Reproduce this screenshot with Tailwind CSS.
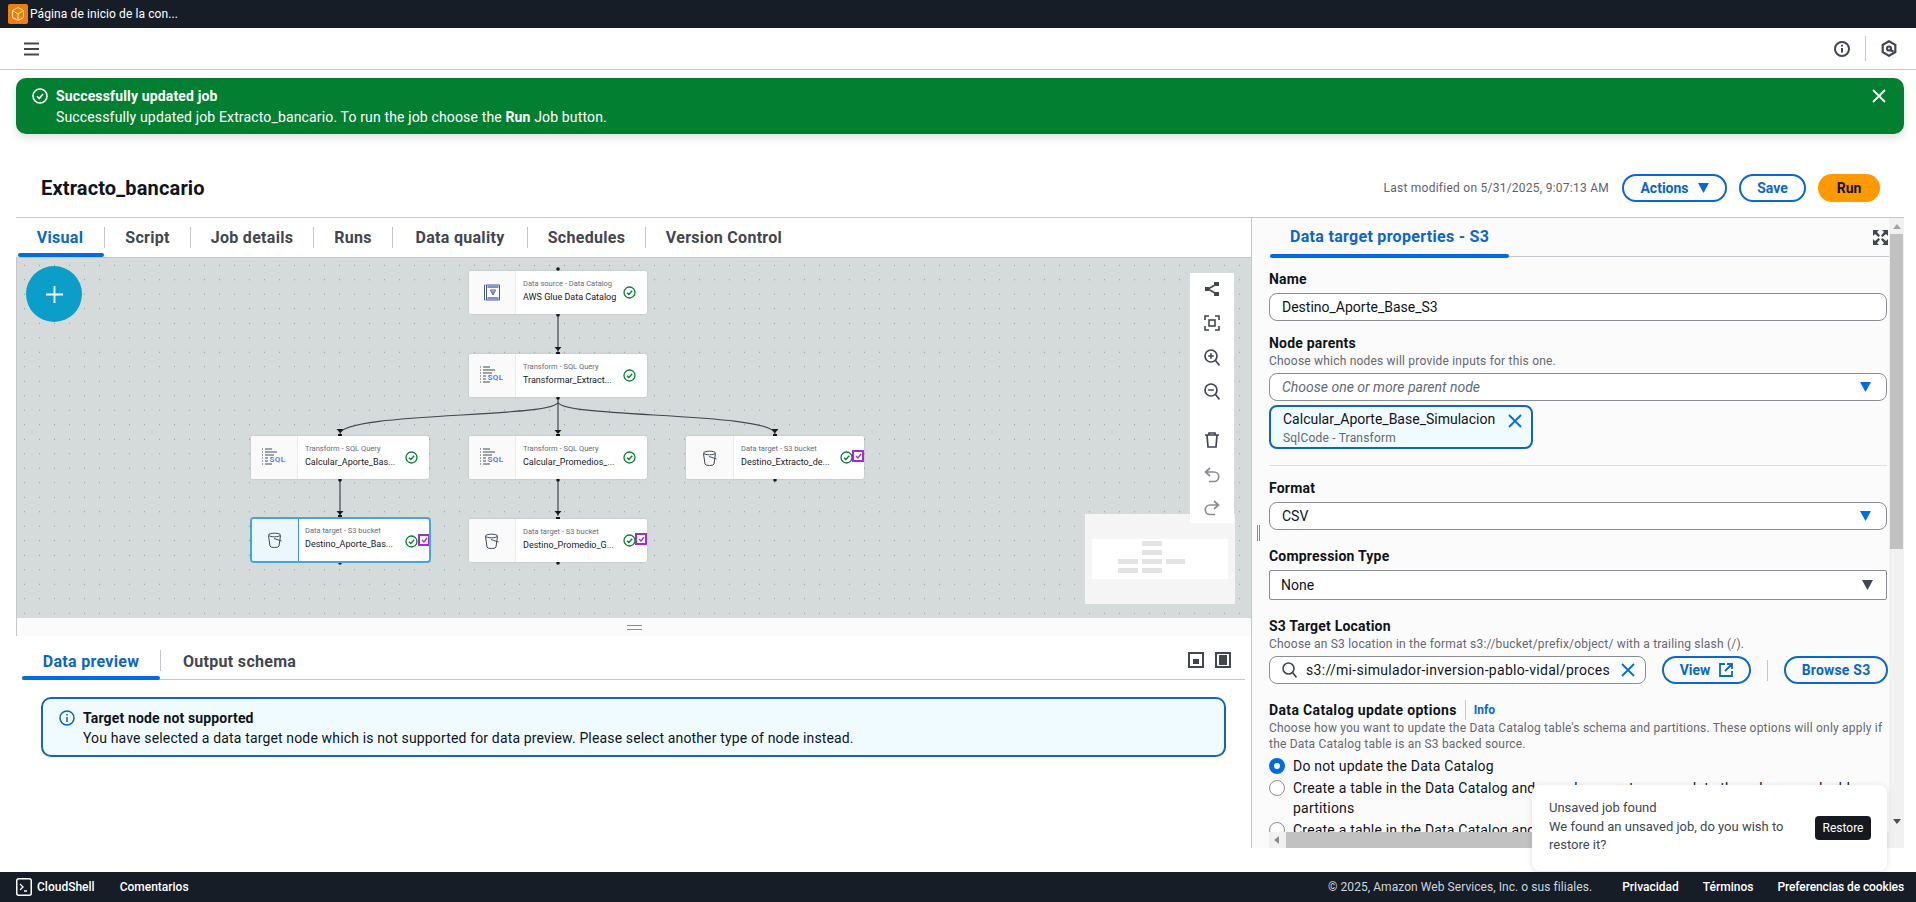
<!DOCTYPE html>
<html lang="es">
<head>
<meta charset="utf-8">
<title>Extracto_bancario</title>
<script src="https://cdn.jsdelivr.net/npm/@tailwindcss/browser@4"></script>
</head>
<body class="w-[1916px] h-[902px] overflow-hidden bg-white font-['Roboto',sans-serif] text-[14px] text-[#0f141a]">
<div class="relative flex flex-col h-[902px]">

  <!-- top bar -->
  <header class="h-[28px] bg-[#161d26] flex items-center pl-[8px] gap-[2px] text-white text-[12px] tracking-[0.1px] shrink-0">
    <span class="w-[20px] h-[20px] rounded-[2px] bg-[#f07f0a] flex items-center justify-center">
      <svg width="16" height="16" viewBox="0 0 16 16" fill="none" stroke="#ffe3c4" stroke-width="1"><path d="M8 1.500l5.500 3v7L8 14.500l-5.500-3v-7z"/><path d="M2.500 4.500L8 8l5.500-3.500M8 8v6.500"/></svg>
    </span>
    <span>Página de inicio de la con...</span>
  </header>

  <!-- nav -->
  <nav class="h-[42px] border-b border-[#c6c6cd] flex items-center justify-between pl-[24px] pr-[19px] shrink-0">
    <svg width="15" height="14" viewBox="0 0 15 14" stroke="#424650" stroke-width="2"><path d="M0 1.500h15M0 7h15M0 12.500h15"/></svg>
    <div class="flex items-center">
      <svg width="16" height="16" viewBox="0 0 16 16" fill="none" stroke="#424650" stroke-width="2"><circle cx="8" cy="8" r="7"/><path d="M8 7v4.500M8 3.700v1.700"/></svg>
      <span class="w-px h-[25px] bg-[#c6c6cd] mx-[15px]"></span>
      <svg width="16" height="17" viewBox="0 0 16 17" fill="none" stroke="#424650" stroke-width="2.200"><path d="M8 1.200l6.300 3.600v7.400L8 15.800l-6.300-3.600V4.800z"/><circle cx="8" cy="8.500" r="2"/><path d="M9.500 10l3 1.700"/></svg>
    </div>
  </nav>

  <!-- main -->
  <main class="flex-1 min-h-0 flex flex-col pl-[16px] pr-[12px]">
    <!-- flash -->
    <div class="mt-[8px] h-[56px] bg-[#037f31] rounded-[10px] text-white flex items-start pl-[16px] pr-[18px] pt-[8px] shadow-[0_4px_8px_rgba(0,0,0,0.12)] shrink-0">
      <svg class="mt-[2px] mr-[8px] shrink-0" width="16" height="16" viewBox="0 0 16 16" fill="none" stroke="#fff" stroke-width="1.600"><circle cx="8" cy="8" r="7"/><path d="M5 8.300l2.200 2.200L11 6"/></svg>
      <div class="flex-1 leading-[20px] text-[14px] tracking-[0.15px]">
        <div class="font-bold">Successfully updated job</div>
        <div class="mt-px">Successfully updated job Extracto_bancario. To run the job choose the <b>Run</b> Job button.</div>
      </div>
      <svg class="mt-[3px]" width="14" height="14" viewBox="0 0 14 14" stroke="#fff" stroke-width="1.800"><path d="M1 1l12 12M13 1L1 13"/></svg>
    </div>

    <!-- page header -->
    <div class="h-[83px] flex items-center justify-between pl-[25px] pr-[24px] pt-[25px] shrink-0">
      <h1 class="text-[20px] font-bold tracking-[0.15px]">Extracto_bancario</h1>
      <div class="flex items-center">
        <span class="text-[12px] tracking-[0.25px] text-[#5f6368] mr-[13px]">Last modified on 5/31/2025, 9:07:13 AM</span>
        <button class="h-[28px] w-[105px] rounded-full border-2 border-[#0a68d0] text-[#0a65cc] font-bold flex items-center justify-center gap-[9px]">Actions
          <svg width="11" height="10" viewBox="0 0 11 10" fill="#0a68d0"><path d="M0 0h11L5.500 10z"/></svg></button>
        <button class="ml-[12px] h-[28px] w-[67px] rounded-full border-2 border-[#0a68d0] text-[#0a65cc] font-bold">Save</button>
        <button class="ml-[12px] h-[28px] w-[62px] rounded-full bg-[#ff9900] font-bold">Run</button>
      </div>
    </div>

    <!-- split -->
    <div class="flex-1 min-h-0 flex border-t border-[#c6c6cd] mb-[24px]">
      <!-- left pane -->
      <section class="w-[1235px] flex flex-col shrink-0">
        <div class="h-[39px] flex items-center text-[16px] font-bold tracking-[0.3px] text-[#424650] shrink-0 relative">
          <div class="w-[88px] h-[39px] flex items-center justify-center text-[#0b66c8] relative">Visual<span class="absolute left-[2px] right-0 bottom-0 h-[4px] rounded-[2px] bg-[#006ce0]"></span></div>
          <span class="w-px h-[21px] bg-[#c6c6cd]"></span>
          <div class="w-[85px] text-center">Script</div>
          <span class="w-px h-[21px] bg-[#c6c6cd]"></span>
          <div class="w-[122px] text-center">Job details</div>
          <span class="w-px h-[21px] bg-[#c6c6cd]"></span>
          <div class="w-[78px] text-center">Runs</div>
          <span class="w-px h-[21px] bg-[#c6c6cd]"></span>
          <div class="w-[134px] text-center">Data quality</div>
          <span class="w-px h-[21px] bg-[#c6c6cd]"></span>
          <div class="w-[117px] text-center">Schedules</div>
          <span class="w-px h-[21px] bg-[#c6c6cd]"></span>
          <div class="w-[156px] text-center">Version Control</div>
        </div>

        <!-- canvas -->
        <div class="relative h-[361px] shrink-0 overflow-hidden border-t border-l border-[#c6c6cd] bg-[#d5dbdb] bg-[radial-gradient(#8d9999_0.7px,transparent_0.8px)] bg-[size:15px_14.500px]">
          <svg class="absolute left-0 top-0" width="1234" height="360" viewBox="17 258 1234 360" fill="none" stroke="#414750" stroke-width="1.200">
            <path d="M558 315V352M558 398V433M558 402C558 418 340 412 340 434M558 402C558 418 775 412 775 434M340 480V515M558 480V516"/>
            <g fill="#16191f" stroke="none">
              <circle cx="558" cy="269" r="1.800"/><circle cx="558" cy="315" r="1.800"/><circle cx="558" cy="398" r="1.800"/><circle cx="340" cy="480" r="1.800"/><circle cx="558" cy="480" r="1.800"/><circle cx="775" cy="480" r="1.800"/><circle cx="340" cy="563" r="1.800"/><circle cx="558" cy="563" r="1.800"/>
              <path d="M554.500 347h7l-3.500 4zM554.500 430h7l-3.500 4zM336.500 429h7l-3.500 4zM771.500 429h7l-3.500 4zM336.500 511h7l-3.500 4zM554.500 511h7l-3.500 4z"/>
              <rect x="556" y="352" width="4" height="2"/><rect x="556" y="434" width="4" height="2"/><rect x="338" y="434" width="4" height="2"/><rect x="773" y="434" width="4" height="2"/><rect x="338" y="515" width="4" height="2"/><rect x="556" y="517" width="4" height="2"/>
            </g>
          </svg>

          <button class="absolute left-[9px] top-[8px] w-[56px] h-[56px] rounded-full bg-[#0a9ec8] flex items-center justify-center">
            <svg width="17" height="17" viewBox="0 0 17 17" stroke="#fff" stroke-width="1.800"><path d="M8.500 0v17M0 8.500h17"/></svg>
          </button>

          <!-- node 1 -->
          <div class="absolute left-[452px] top-[13px] w-[178px] h-[43px] bg-white rounded-[2px] flex overflow-hidden shadow-[0_0_2px_rgba(0,0,0,0.2)]">
            <div class="w-[47px] bg-[#fafafa] border-r border-[#e9ebed] flex items-center justify-center shrink-0">
              <svg width="16" height="17" viewBox="0 0 16 17" fill="none" stroke="#4a5a8a"><path d="M1.500 1H0.500V16H1.500M2.500 1h13v15h-13z"/><rect x="3.500" y="1.500" width="11" height="2.500" fill="#7d8fcf" stroke="none"/><rect x="3.500" y="13" width="11" height="2.500" fill="#7d8fcf" stroke="none"/><path d="M6.500 6h5L9 11zM7.500 8h3"/></svg>
            </div>
            <div class="pl-[7px] pt-[6px] leading-[13px] min-w-0 flex-1">
              <div class="text-[7.500px] text-[#5f6b7a]">Data source - Data Catalog</div>
              <div class="text-[9px] mt-px text-[#16191f] whitespace-nowrap">AWS Glue Data Catalog</div>
            </div>
            <svg class="absolute left-[154px] top-[15px]" width="13" height="13" viewBox="0 0 13 13" fill="none" stroke="#037f31" stroke-width="1.300"><circle cx="6.500" cy="6.500" r="5.500"/><path d="M4 6.700l1.900 1.800L9.200 4.800"/></svg>
          </div>

          <!-- node 2 -->
          <div class="absolute left-[452px] top-[96px] w-[178px] h-[43px] bg-white rounded-[2px] flex overflow-hidden shadow-[0_0_2px_rgba(0,0,0,0.2)]">
            <div class="w-[47px] bg-[#fafafa] border-r border-[#e9ebed] flex items-center justify-center shrink-0">
              <svg width="24" height="20" viewBox="0 0 24 20" stroke="#3e4a5a" stroke-width="1.200"><path d="M0 1h1M3 1h7M0 4h1M3 4h12M0 7h1M3 7h9M0 10h1M3 10h3M0 13h1M3 13h3M0 16h1M3 16h7"/><text x="7.500" y="14" font-size="8" font-weight="700" letter-spacing="0.4" fill="#5b7fd8" stroke="none" font-family="Roboto">SQL</text></svg>
            </div>
            <div class="pl-[7px] pt-[6px] leading-[13px] min-w-0 flex-1">
              <div class="text-[7.500px] text-[#5f6b7a]">Transform - SQL Query</div>
              <div class="text-[9px] mt-px text-[#16191f] whitespace-nowrap">Transformar_Extract...</div>
            </div>
            <svg class="absolute left-[154px] top-[15px]" width="13" height="13" viewBox="0 0 13 13" fill="none" stroke="#037f31" stroke-width="1.300"><circle cx="6.500" cy="6.500" r="5.500"/><path d="M4 6.700l1.900 1.800L9.200 4.800"/></svg>
          </div>

          <!-- node 3 -->
          <div class="absolute left-[234px] top-[178px] w-[178px] h-[43px] bg-white rounded-[2px] flex overflow-hidden shadow-[0_0_2px_rgba(0,0,0,0.2)]">
            <div class="w-[47px] bg-[#fafafa] border-r border-[#e9ebed] flex items-center justify-center shrink-0">
              <svg width="24" height="20" viewBox="0 0 24 20" stroke="#3e4a5a" stroke-width="1.200"><path d="M0 1h1M3 1h7M0 4h1M3 4h12M0 7h1M3 7h9M0 10h1M3 10h3M0 13h1M3 13h3M0 16h1M3 16h7"/><text x="7.500" y="14" font-size="8" font-weight="700" letter-spacing="0.4" fill="#5b7fd8" stroke="none" font-family="Roboto">SQL</text></svg>
            </div>
            <div class="pl-[7px] pt-[6px] leading-[13px] min-w-0 flex-1">
              <div class="text-[7.500px] text-[#5f6b7a]">Transform - SQL Query</div>
              <div class="text-[9px] mt-px text-[#16191f] whitespace-nowrap">Calcular_Aporte_Bas...</div>
            </div>
            <svg class="absolute left-[154px] top-[15px]" width="13" height="13" viewBox="0 0 13 13" fill="none" stroke="#037f31" stroke-width="1.300"><circle cx="6.500" cy="6.500" r="5.500"/><path d="M4 6.700l1.900 1.800L9.200 4.800"/></svg>
          </div>

          <!-- node 4 -->
          <div class="absolute left-[452px] top-[178px] w-[178px] h-[43px] bg-white rounded-[2px] flex overflow-hidden shadow-[0_0_2px_rgba(0,0,0,0.2)]">
            <div class="w-[47px] bg-[#fafafa] border-r border-[#e9ebed] flex items-center justify-center shrink-0">
              <svg width="24" height="20" viewBox="0 0 24 20" stroke="#3e4a5a" stroke-width="1.200"><path d="M0 1h1M3 1h7M0 4h1M3 4h12M0 7h1M3 7h9M0 10h1M3 10h3M0 13h1M3 13h3M0 16h1M3 16h7"/><text x="7.500" y="14" font-size="8" font-weight="700" letter-spacing="0.4" fill="#5b7fd8" stroke="none" font-family="Roboto">SQL</text></svg>
            </div>
            <div class="pl-[7px] pt-[6px] leading-[13px] min-w-0 flex-1">
              <div class="text-[7.500px] text-[#5f6b7a]">Transform - SQL Query</div>
              <div class="text-[9px] mt-px text-[#16191f] whitespace-nowrap">Calcular_Promedios_...</div>
            </div>
            <svg class="absolute left-[154px] top-[15px]" width="13" height="13" viewBox="0 0 13 13" fill="none" stroke="#037f31" stroke-width="1.300"><circle cx="6.500" cy="6.500" r="5.500"/><path d="M4 6.700l1.900 1.800L9.200 4.800"/></svg>
          </div>

          <!-- node 5 selected -->
          <div class="absolute left-[233px] top-[259px] w-[181px] h-[46px] bg-white rounded-[4px] border-2 border-[#44a6e0] flex overflow-hidden">
            <div class="w-[47px] bg-[#ebf6fd] border-r border-[#3f8fc8] flex items-center justify-center shrink-0">
              <svg width="16" height="16" viewBox="0 0 16 16" fill="none" stroke="#3e4a5a" stroke-width="1"><ellipse cx="7.500" cy="3" rx="6" ry="1.800"/><path d="M1.500 3.500L3 14a4.500 1.500 0 009 0l1.500-10.500M7 6.500l7.500 2.500"/></svg>
            </div>
            <div class="pl-[6px] pt-[5px] leading-[13px] min-w-0 flex-1">
              <div class="text-[7.500px] text-[#5f6b7a]">Data target - S3 bucket</div>
              <div class="text-[9px] mt-px text-[#16191f] whitespace-nowrap">Destino_Aporte_Bas...</div>
            </div>
            <svg class="absolute left-[153px] top-[16px]" width="13" height="13" viewBox="0 0 13 13" fill="none" stroke="#037f31" stroke-width="1.300"><circle cx="6.500" cy="6.500" r="5.500"/><path d="M4 6.700l1.900 1.800L9.200 4.800"/></svg>
            <span class="absolute left-[166px] top-[15px] w-[12px] h-[12px] border-2 border-[#a32cd1] bg-white flex items-center justify-center"><svg width="7" height="6" viewBox="0 0 7 6" fill="none" stroke="#a32cd1" stroke-width="1.300"><path d="M1 3l2 2 3-4"/></svg></span>
          </div>

          <!-- node 6 -->
          <div class="absolute left-[452px] top-[261px] w-[178px] h-[43px] bg-white rounded-[2px] flex overflow-hidden shadow-[0_0_2px_rgba(0,0,0,0.2)]">
            <div class="w-[47px] bg-[#fafafa] border-r border-[#e9ebed] flex items-center justify-center shrink-0">
              <svg width="16" height="16" viewBox="0 0 16 16" fill="none" stroke="#3e4a5a" stroke-width="1"><ellipse cx="7.500" cy="3" rx="6" ry="1.800"/><path d="M1.500 3.500L3 14a4.500 1.500 0 009 0l1.500-10.500M7 6.500l7.500 2.500"/></svg>
            </div>
            <div class="pl-[7px] pt-[6px] leading-[13px] min-w-0 flex-1">
              <div class="text-[7.500px] text-[#5f6b7a]">Data target - S3 bucket</div>
              <div class="text-[9px] mt-px text-[#16191f] whitespace-nowrap">Destino_Promedio_G...</div>
            </div>
            <svg class="absolute left-[154px] top-[15px]" width="13" height="13" viewBox="0 0 13 13" fill="none" stroke="#037f31" stroke-width="1.300"><circle cx="6.500" cy="6.500" r="5.500"/><path d="M4 6.700l1.900 1.800L9.200 4.800"/></svg>
            <span class="absolute left-[166px] top-[14px] w-[12px] h-[12px] border-2 border-[#a32cd1] bg-white flex items-center justify-center"><svg width="7" height="6" viewBox="0 0 7 6" fill="none" stroke="#a32cd1" stroke-width="1.300"><path d="M1 3l2 2 3-4"/></svg></span>
          </div>

          <!-- node 7 -->
          <div class="absolute left-[669px] top-[178px] w-[178px] h-[43px] bg-white rounded-[2px] flex overflow-hidden shadow-[0_0_2px_rgba(0,0,0,0.2)]">
            <div class="w-[48px] bg-[#fafafa] border-r border-[#e9ebed] flex items-center justify-center shrink-0">
              <svg width="16" height="16" viewBox="0 0 16 16" fill="none" stroke="#3e4a5a" stroke-width="1"><ellipse cx="7.500" cy="3" rx="6" ry="1.800"/><path d="M1.500 3.500L3 14a4.500 1.500 0 009 0l1.500-10.500M7 6.500l7.500 2.500"/></svg>
            </div>
            <div class="pl-[7px] pt-[6px] leading-[13px] min-w-0 flex-1">
              <div class="text-[7.500px] text-[#5f6b7a]">Data target - S3 bucket</div>
              <div class="text-[9px] mt-px text-[#16191f] whitespace-nowrap">Destino_Extracto_de...</div>
            </div>
            <svg class="absolute left-[154px] top-[15px]" width="13" height="13" viewBox="0 0 13 13" fill="none" stroke="#037f31" stroke-width="1.300"><circle cx="6.500" cy="6.500" r="5.500"/><path d="M4 6.700l1.900 1.800L9.200 4.800"/></svg>
            <span class="absolute left-[166px] top-[14px] w-[12px] h-[12px] border-2 border-[#a32cd1] bg-white flex items-center justify-center"><svg width="7" height="6" viewBox="0 0 7 6" fill="none" stroke="#a32cd1" stroke-width="1.300"><path d="M1 3l2 2 3-4"/></svg></span>
          </div>

          <!-- minimap -->
          <div class="absolute left-[1068px] top-[256px] w-[150px] h-[90px] bg-[#f5f5f5]">
            <div class="absolute left-[7px] top-[25px] w-[136px] h-[40px] bg-white">
              <span class="absolute left-[50px] top-[2px] w-[20px] h-[5px] bg-[#e3e3e3]"></span>
              <span class="absolute left-[50px] top-[11px] w-[20px] h-[5px] bg-[#e3e3e3]"></span>
              <span class="absolute left-[26px] top-[20px] w-[20px] h-[5px] bg-[#e3e3e3]"></span>
              <span class="absolute left-[50px] top-[20px] w-[20px] h-[5px] bg-[#e3e3e3]"></span>
              <span class="absolute left-[74px] top-[20px] w-[19px] h-[5px] bg-[#e3e3e3]"></span>
              <span class="absolute left-[26px] top-[29px] w-[20px] h-[5px] bg-[#e3e3e3]"></span>
              <span class="absolute left-[50px] top-[29px] w-[20px] h-[5px] bg-[#e3e3e3]"></span>
            </div>
          </div>

          <!-- toolbar -->
          <div class="absolute left-[1173px] top-[15px] w-[44px] h-[250px] bg-white flex flex-col items-center pt-[9px]">
            <svg class="shrink-0" width="14" height="14" viewBox="0 0 14 14" fill="#424650" stroke="#424650" stroke-width="1.500"><path d="M3 7l8-4.500M3 7l8 4.500"/><rect x="0" y="5" width="4" height="4" stroke="none"/><rect x="9" y="0" width="5" height="4" stroke="none"/><rect x="9" y="10" width="5" height="4" stroke="none"/></svg>
            <svg class="mt-[19px] shrink-0" width="16" height="16" viewBox="0 0 16 16" fill="none" stroke="#424650" stroke-width="1.600"><path d="M1 5V1h4M11 1h4v4M15 11v4h-4M5 15H1v-4"/><rect x="5" y="5" width="6" height="6"/></svg>
            <svg class="mt-[18px] shrink-0" width="16" height="17" viewBox="0 0 16 17" fill="none" stroke="#424650" stroke-width="1.700"><circle cx="7" cy="7" r="6"/><path d="M11.500 11.500l4 5M7 4.200v5.600M4.200 7h5.600"/></svg>
            <svg class="mt-[17px] shrink-0" width="16" height="17" viewBox="0 0 16 17" fill="none" stroke="#424650" stroke-width="1.700"><circle cx="7" cy="7" r="6"/><path d="M11.500 11.500l4 5M4.200 7h5.600"/></svg>
            <svg class="mt-[32px] shrink-0" width="14" height="16" viewBox="0 0 14 16" fill="none" stroke="#424650" stroke-width="1.700"><path d="M0 3h14M4 3V1h6v2M2 3l1 12h8l1-12"/></svg>
            <svg class="mt-[19px] shrink-0" width="16" height="16" viewBox="0 0 16 16" fill="none" stroke="#8c8c94" stroke-width="1.700"><path d="M6 1L1.500 5 6 9M1.500 5H10a4.500 4.500 0 010 9.500H5"/></svg>
            <svg class="mt-[17px] shrink-0" width="16" height="16" viewBox="0 0 16 16" fill="none" stroke="#8c8c94" stroke-width="1.700"><path d="M10 1l4.500 4L10 9M14.500 5H6a4.500 4.500 0 000 9.500h5"/></svg>
          </div>
        </div>

        <!-- resize bar -->
        <div class="h-[18px] bg-[#fbfbfb] border-l border-[#c6c6cd] flex items-center justify-center shrink-0">
          <span class="w-[15px] h-[5px] border-y border-[#8c8c94]"></span>
        </div>

        <!-- bottom panel -->
        <div class="flex-1 min-h-0 bg-white pl-[6px] pr-[6px]">
          <div class="h-[44px] border-b border-[#c6c6cd] flex items-center text-[16px] font-bold tracking-[0.3px] text-[#424650] relative">
            <div class="w-[138px] h-[44px] pt-[8px] flex items-center justify-center text-[#0b66c8] relative">Data preview<span class="absolute left-0 right-0 bottom-0 h-[4px] rounded-[2px] bg-[#006ce0]"></span></div>
            <span class="w-px h-[21px] mt-[6px] bg-[#c6c6cd]"></span>
            <div class="pl-[22px] pt-[8px]">Output schema</div>
            <div class="ml-auto flex items-center gap-[11px] pr-[14px] pt-[4px]">
              <svg width="16" height="16" viewBox="0 0 16 16" fill="none"><rect x="1" y="1" width="14" height="14" stroke="#424650" stroke-width="2"/><rect x="5" y="7" width="6" height="5" fill="#424650"/></svg>
              <svg width="16" height="16" viewBox="0 0 16 16" fill="none"><rect x="1" y="1" width="14" height="14" stroke="#424650" stroke-width="2"/><rect x="4" y="3" width="8" height="10" fill="#424650"/></svg>
            </div>
          </div>
          <div class="mx-[19px] mt-[17px] h-[60px] rounded-[10px] border-2 border-[#1666b5] bg-[#f0fbff] flex pl-[16px] pt-[9px]">
            <svg class="mt-[2px] mr-[8px] shrink-0" width="16" height="16" viewBox="0 0 16 16" fill="none" stroke="#0a64c2" stroke-width="1.500"><circle cx="8" cy="8" r="7"/><path d="M8 7v5M8 4v1.500"/></svg>
            <div class="leading-[20px] tracking-[0.15px]">
              <div class="font-bold">Target node not supported</div>
              <div>You have selected a data target node which is not supported for data preview. Please select another type of node instead.</div>
            </div>
          </div>
        </div>
      </section>

      <!-- right pane -->
      <section class="flex-1 min-w-0 flex border-l border-[#c6c6cd] bg-[#fbfbfb] relative">
        <div class="flex-1 min-w-0 flex flex-col">
          <div class="h-[39px] ml-[18px] border-b border-[#c6c6cd] flex items-center text-[16px] font-bold tracking-[0.3px] text-[#0b66c8] relative shrink-0">
            <div class="w-[239px] h-[39px] pl-[20px] flex items-center relative">Data target properties - S3<span class="absolute left-0 right-0 bottom-[-1px] h-[4px] rounded-[2px] bg-[#006ce0]"></span></div>
            <svg class="absolute right-[1px] top-[12px]" width="15" height="15" viewBox="0 0 15 15" fill="#424650"><path d="M0 0h6L4 2l3 3.500L5.500 7 2 4 0 6zM15 0v6l-2-2-3.500 3L8 5.500 11 2 9 0zM0 15V9l2 2 3.500-3L7 9.500 4 13l2 2zM15 15H9l2-2-3-3.500L9.500 8l3.500 3 2-2z"/></svg>
          </div>

          <div class="flex-1 min-h-0 overflow-hidden pl-[17px] pr-[2px] pt-[12px]">
            <div class="font-bold tracking-[0.2px] leading-[20px]">Name</div>
            <div class="mt-[4px] h-[28px] rounded-[8px] border border-[#8c8c94] bg-white flex items-center pl-[12px]">Destino_Aporte_Base_S3</div>

            <div class="mt-[12px] font-bold tracking-[0.2px] leading-[20px]">Node parents</div>
            <div class="text-[12px] tracking-[0.2px] leading-[16px] text-[#656871]">Choose which nodes will provide inputs for this one.</div>
            <div class="mt-[4px] h-[28px] rounded-[8px] border border-[#8c8c94] bg-white flex items-center justify-between pl-[12px] pr-[15px]">
              <i class="text-[#5f6b7a]">Choose one or more parent node</i>
              <svg width="11" height="10" viewBox="0 0 11 10" fill="#006ce0"><path d="M0 0h11L5.500 10z"/></svg>
            </div>
            <div class="mt-[4px] w-[264px] h-[44px] rounded-[8px] border-2 border-[#0f66b8] bg-[#f0fbff] pl-[12px] pt-[2px] relative">
              <div class="leading-[20px]">Calcular_Aporte_Base_Simulacion</div>
              <div class="text-[12px] tracking-[0.2px] leading-[16px] text-[#656871] mt-px">SqlCode - Transform</div>
              <svg class="absolute right-[9px] top-[7px]" width="14" height="14" viewBox="0 0 14 14" stroke="#006ce0" stroke-width="1.800"><path d="M1 1l12 12M13 1L1 13"/></svg>
            </div>
            <div class="mt-[16px] h-px bg-[#dedee3]"></div>

            <div class="mt-[12px] font-bold tracking-[0.2px] leading-[20px]">Format</div>
            <div class="mt-[4px] h-[28px] rounded-[8px] border border-[#8c8c94] bg-white flex items-center justify-between pl-[12px] pr-[15px]">
              <span>CSV</span>
              <svg width="11" height="10" viewBox="0 0 11 10" fill="#006ce0"><path d="M0 0h11L5.500 10z"/></svg>
            </div>

            <div class="mt-[16px] font-bold tracking-[0.2px] leading-[20px]">Compression Type</div>
            <div class="mt-[4px] h-[30px] rounded-[2px] border border-[#8c8c94] bg-white flex items-center justify-between pl-[11px] pr-[13px]">
              <span>None</span>
              <svg width="11" height="10" viewBox="0 0 11 10" fill="#424650"><path d="M0 0h11L5.500 10z"/></svg>
            </div>

            <div class="mt-[16px] font-bold tracking-[0.2px] leading-[20px]">S3 Target Location</div>
            <div class="text-[12px] tracking-[0.2px] leading-[16px] text-[#656871]">Choose an S3 location in the format s3://bucket/prefix/object/ with a trailing slash (/).</div>
            <div class="mt-[4px] flex items-center">
              <div class="w-[377px] h-[28px] rounded-[8px] border border-[#8c8c94] bg-white flex items-center pl-[12px] pr-[10px] overflow-hidden shrink-0">
                <svg class="shrink-0 mr-[9px]" width="15" height="16" viewBox="0 0 15 16" fill="none" stroke="#424650" stroke-width="1.600"><circle cx="6.500" cy="6.500" r="5.500"/><path d="M10.500 10.500l4 5"/></svg>
                <span class="flex-1 whitespace-nowrap overflow-hidden tracking-[0.3px]">s3://mi-simulador-inversion-pablo-vidal/proces</span>
                <svg class="shrink-0 ml-[8px]" width="14" height="14" viewBox="0 0 14 14" stroke="#006ce0" stroke-width="1.800"><path d="M1 1l12 12M13 1L1 13"/></svg>
              </div>
              <button class="ml-[16px] w-[89px] h-[28px] rounded-full border-2 border-[#0a68d0] text-[#0a65cc] font-bold flex items-center justify-center gap-[9px] shrink-0">View
                <svg width="14" height="14" viewBox="0 0 14 14" fill="none" stroke="#0a68d0" stroke-width="1.800"><path d="M6 1H1v12h12V8M8 1h5v5M13 1L6 8"/></svg></button>
              <span class="w-px h-[21px] bg-[#c6c6cd] mx-[16px] shrink-0"></span>
              <button class="w-[104px] h-[28px] rounded-full border-2 border-[#0a68d0] text-[#0a65cc] font-bold tracking-[0.2px] shrink-0">Browse S3</button>
            </div>

            <div class="mt-[16px] flex items-center leading-[20px]">
              <span class="font-bold tracking-[0.35px]">Data Catalog update options</span>
              <span class="w-px h-[20px] bg-[#c6c6cd] mx-[8px]"></span>
              <span class="text-[12px] font-bold text-[#0b66c8]">Info</span>
            </div>
            <div class="text-[12px] tracking-[0.2px] leading-[16px] text-[#656871]">Choose how you want to update the Data Catalog table's schema and partitions. These options will only apply if the Data Catalog table is an S3 backed source.</div>
            <div class="mt-[4px] flex leading-[20px] tracking-[0.2px]">
              <span class="w-[16px] h-[16px] mt-[2px] mr-[8px] rounded-full border-[5px] border-[#006ce0] bg-white shrink-0"></span>
              <span>Do not update the Data Catalog</span>
            </div>
            <div class="mt-[2px] flex leading-[20px] tracking-[0.2px]">
              <span class="w-[16px] h-[16px] mt-[2px] mr-[8px] rounded-full border border-[#8c8c94] bg-white shrink-0"></span>
              <span>Create a table in the Data Catalog and on subsequent runs, update the schema and add new partitions</span>
            </div>
            <div class="mt-[2px] flex leading-[20px] tracking-[0.2px]">
              <span class="w-[16px] h-[16px] mt-[2px] mr-[8px] rounded-full border border-[#8c8c94] bg-white shrink-0"></span>
              <span>Create a table in the Data Catalog and on subsequent runs, keep existing schema and add new partitions</span>
            </div>
          </div>

          <!-- horizontal scrollbar -->
          <div class="h-[16px] ml-[17px] bg-[#f1f1f1] flex items-center shrink-0">
            <svg class="ml-[5px] shrink-0" width="6" height="8" viewBox="0 0 6 8" fill="#8a8a8a"><path d="M5 0v8L0 4z"/></svg>
            <span class="ml-[6px] h-[16px] w-[500px] bg-[#c1c1c1]"></span>
          </div>
        </div>

        <!-- vertical scrollbar -->
        <div class="w-[15px] bg-[#f1f1f1] shrink-0 flex flex-col items-center">
          <svg class="mt-[6px]" width="8" height="5" viewBox="0 0 8 5" fill="#a3a3a3"><path d="M0 5h8L4 0z"/></svg>
          <span class="mt-[5px] w-[13px] h-[315px] bg-[#c1c1c1]"></span>
          <svg class="mt-auto mb-[24px]" width="8" height="5" viewBox="0 0 8 5" fill="#505050"><path d="M0 0h8L4 5z"/></svg>
        </div>

        <!-- resize handle -->
        <span class="absolute left-[5px] top-[307px] w-[3px] h-[16px] border-x border-[#8c8c94]"></span>
      </section>
    </div>
  </main>

  <!-- footer -->
  <footer class="h-[30px] bg-[#161d26] text-white text-[12px] flex items-center shrink-0 pl-[16px] pr-[12px]">
    <svg class="mr-[5px]" width="16" height="18" viewBox="0 0 16 18" fill="none"><rect x="0.750" y="0.750" width="14.500" height="16.500" rx="2" stroke="#fff" stroke-width="1.500"/><path d="M4 6l3 3-3 3M8 13h3" stroke="#fff" stroke-width="1.300"/></svg>
    <span class="font-medium">CloudShell</span>
    <span class="ml-[25px] font-medium">Comentarios</span>
    <span class="ml-auto tracking-[0.06px] text-[#d1d5db]">© 2025, Amazon Web Services, Inc. o sus filiales.</span>
    <span class="ml-[30px] font-medium">Privacidad</span>
    <span class="ml-[24px] font-medium">Términos</span>
    <span class="ml-[24px] font-medium tracking-[-0.1px]">Preferencias de cookies</span>
  </footer>

  <!-- toast -->
  <div class="absolute left-[1532px] top-[785px] w-[355px] h-[86px] bg-white rounded-[8px] shadow-[0_1px_6px_rgba(0,0,0,0.12)] pl-[17px] pt-[14px] flex">
    <div class="w-[256px] text-[13px] leading-[18.500px] text-[#414750]">
      <div>Unsaved job found</div>
      <div>We found an unsaved job, do you wish to restore it?</div>
    </div>
    <button class="mt-[17px] ml-[10px] w-[56px] h-[24px] rounded-[4px] bg-[#16191f] text-white text-[12px]">Restore</button>
  </div>
</div>
</body>
</html>
